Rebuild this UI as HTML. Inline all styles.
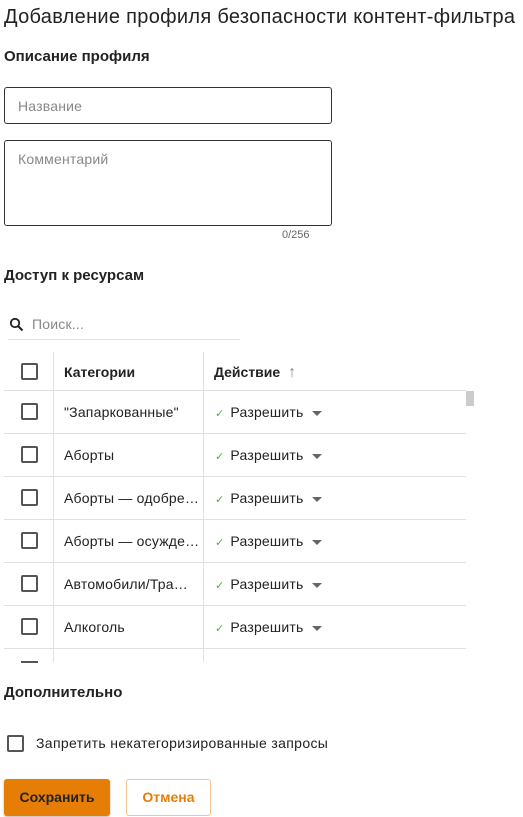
<!DOCTYPE html>
<html><head><meta charset="utf-8"><style>
*{box-sizing:border-box;margin:0;padding:0}
body{width:523px;height:817px;overflow:hidden;background:#fff;font-family:"Liberation Sans",sans-serif;color:#222;position:relative}
.a{position:absolute;white-space:nowrap}
.h{font-size:15px;font-weight:bold;color:#222}
.inp{position:absolute;border:1px solid #333;border-radius:3px;left:4px;width:328px}
.ph{color:#888;font-size:14px;letter-spacing:0.2px}
.cb{position:absolute;width:17px;height:17px;border:2px solid #555;border-radius:2px}
.line{position:absolute;height:1px;background:#e0e0e0}
.vl{position:absolute;width:1px;background:#e0e0e0;top:352px;height:310px}
.cell{position:absolute;font-size:14px;color:#222;letter-spacing:0.2px}
.act{position:absolute;left:215px;font-size:14px;color:#222;letter-spacing:0.2px}
.act .ck{color:#4caf50;font-size:11px;margin-right:6px}
.act .tri{display:inline-block;width:0;height:0;border-left:5px solid transparent;border-right:5px solid transparent;border-top:5px solid #666;margin-left:9px;vertical-align:middle}
</style></head><body>
<div class="a" style="left:4px;top:6px;font-size:20px;color:#222;letter-spacing:0.3px">Добавление профиля безопасности контент-фильтра</div>
<div class="a h" style="left:4px;top:48px">Описание профиля</div>
<div class="inp" style="top:87px;height:37px"><span class="a ph" style="left:13px;top:10px">Название</span></div>
<div class="inp" style="top:140px;height:86px"><span class="a ph" style="left:13px;top:10px">Комментарий</span></div>
<div class="a" style="left:282px;top:229px;font-size:11px;color:#666">0/256</div>
<div class="a h" style="left:4px;top:267px">Доступ к ресурсам</div>
<svg class="a" style="left:9px;top:317px" width="15" height="15" viewBox="0 0 15 15"><circle cx="6" cy="6" r="4.2" fill="none" stroke="#222" stroke-width="1.8"/><path d="M9 9l4.5 4.5" stroke="#222" stroke-width="2"/></svg>
<div class="a ph" style="left:32px;top:316px">Поиск...</div>
<div class="line" style="left:8px;top:339px;width:232px"></div>
<div class="vl" style="left:53px"></div>
<div class="vl" style="left:203px"></div>
<div class="cb" style="left:21px;top:363px"></div>
<div class="cell" style="left:64px;top:364px;font-weight:bold;letter-spacing:0">Категории</div>
<div class="cell" style="left:214px;top:364px;font-weight:bold;letter-spacing:0">Действие <span style="color:#888;font-weight:normal;margin-left:4px;font-size:16px">↑</span></div>
<div class="line" style="left:4px;top:390px;width:462px"></div>
<div class="a" style="left:466px;top:391px;width:8px;height:15px;background:#ccc"></div>

<div class="cb" style="left:21px;top:403px"></div><div class="cell" style="left:64px;top:404px">"Запаркованные"</div><div class="act" style="top:404px"><span class="ck">✓</span>Разрешить<span class="tri"></span></div>
<div class="line" style="left:4px;top:433px;width:462px"></div>
<div class="cb" style="left:21px;top:446px"></div><div class="cell" style="left:64px;top:447px">Аборты</div><div class="act" style="top:447px"><span class="ck">✓</span>Разрешить<span class="tri"></span></div>
<div class="line" style="left:4px;top:476px;width:462px"></div>
<div class="cb" style="left:21px;top:489px"></div><div class="cell" style="left:64px;top:490px">Аборты — одобре…</div><div class="act" style="top:490px"><span class="ck">✓</span>Разрешить<span class="tri"></span></div>
<div class="line" style="left:4px;top:519px;width:462px"></div>
<div class="cb" style="left:21px;top:532px"></div><div class="cell" style="left:64px;top:533px">Аборты — осужде…</div><div class="act" style="top:533px"><span class="ck">✓</span>Разрешить<span class="tri"></span></div>
<div class="line" style="left:4px;top:562px;width:462px"></div>
<div class="cb" style="left:21px;top:575px"></div><div class="cell" style="left:64px;top:576px">Автомобили/Тра…</div><div class="act" style="top:576px"><span class="ck">✓</span>Разрешить<span class="tri"></span></div>
<div class="line" style="left:4px;top:605px;width:462px"></div>
<div class="cb" style="left:21px;top:618px"></div><div class="cell" style="left:64px;top:619px">Алкоголь</div><div class="act" style="top:619px"><span class="ck">✓</span>Разрешить<span class="tri"></span></div>
<div class="line" style="left:4px;top:648px;width:462px"></div>
<div style="position:absolute;left:21px;top:661px;width:17px;height:2px;background:#555"></div>

<div class="a h" style="left:4px;top:684px">Дополнительно</div>
<div class="cb" style="left:7px;top:735px"></div>
<div class="a" style="left:36px;top:735px;font-size:14px;letter-spacing:0.35px">Запретить некатегоризированные запросы</div>
<div class="a" style="left:4px;top:779px;width:106px;height:37px;background:#e67e06;border-radius:3px;font-weight:bold;font-size:14px;color:#222;text-align:center;line-height:37px;box-shadow:0 1px 2px rgba(0,0,0,.3)">Сохранить</div>
<div class="a" style="left:126px;top:779px;width:85px;height:37px;border:1px solid #f5c48a;border-radius:3px;font-weight:bold;font-size:14px;color:#e67e06;text-align:center;line-height:35px">Отмена</div>
</body></html>
